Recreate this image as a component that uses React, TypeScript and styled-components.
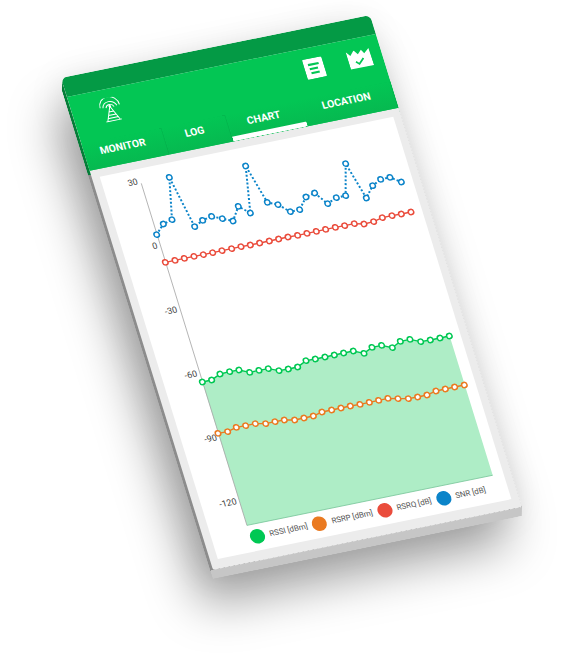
import React from "react";
import styled, { createGlobalStyle } from "styled-components";

const GlobalStyle = createGlobalStyle`
  html, body {
    margin: 0;
    padding: 0;
    width: 563px;
    height: 662px;
    overflow: hidden;
    background: #fff;
    font-family: Roboto, "Liberation Sans", sans-serif;
  }
`;

const DEVICE_W = 320;
const DEVICE_H = 520;

// device plane -> screen: matrix(a, b, c, d, e, f)
const A = 309 / DEVICE_W;
const B = -63 / DEVICE_W;
const C = 152 / DEVICE_H;
const D = 492 / DEVICE_H;
const E = 61;
const F = 78;

type Point = [number, number];

// the curves were read off at 3x from crops, so they are stored in crop coordinates
function fromCrop(ox: number, oy: number, pts: Point[]): Point[] {
  const det = A * D - B * C;
  return pts.map(([x, y]) => {
    const dx = ox + x / 3 - E;
    const dy = oy + y / 3 - F;
    return [(D * dx - C * dy) / det, (A * dy - B * dx) / det] as Point;
  });
}

const snr = fromCrop(110, 150, [
  [140, 254], [160, 222], [186, 209], [178, 82], [254, 230], [278, 211], [305, 199],
  [337, 206], [369, 213], [385, 169], [421, 189], [407, 48], [472, 157], [504, 164],
  [541, 185], [569, 179], [588, 141], [614, 129], [653, 161], [679, 143], [707, 137],
  [707, 41], [769, 144], [788, 107], [812, 88], [840, 82], [874, 96],
]);

const rsrq = fromCrop(110, 150, [
  [166, 337], [195, 331], [223, 325], [252, 319], [280, 314], [308, 308], [336, 302],
  [365, 296], [393, 290], [421, 285], [449, 279], [478, 273], [506, 267], [534, 261],
  [563, 256], [591, 250], [619, 244], [647, 238], [676, 232], [704, 227], [733, 221],
  [762, 222], [791, 215], [817, 203], [846, 197], [874, 192], [903, 186],
]);

const rssi = fromCrop(180, 320, [
  [67, 186], [95, 180], [120, 162], [149, 155], [177, 150], [209, 157], [237, 151],
  [265, 146], [297, 152], [325, 147], [353, 141], [378, 122], [406, 117], [435, 111],
  [463, 105], [491, 99], [520, 93], [552, 100], [576, 82], [605, 76], [637, 83],
  [661, 64], [690, 58], [722, 65], [751, 60], [780, 54], [808, 48],
]);

const rsrp = fromCrop(180, 320, [
  [114, 340], [143, 335], [169, 322], [197, 317], [226, 311], [257, 311], [285, 305],
  [313, 300], [344, 300], [372, 294], [400, 288], [426, 276], [455, 270], [483, 264],
  [511, 258], [540, 253], [568, 247], [596, 241], [624, 235], [654, 236], [685, 236],
  [713, 231], [741, 225], [768, 213], [796, 207], [824, 201], [853, 195],
]);

const COLORS = {
  rssi: "#00c853",
  rsrp: "#ea7a21",
  rsrq: "#ea4c3c",
  snr: "#0b84c9",
};

const AXIS_X = 46.5;
const BASELINE = 482.5;
const FILL_RIGHT = 301;
const TICKS: [string, number][] = [
  ["30", 118.4],
  ["0", 186],
  ["-30", 253.6],
  ["-60", 321.2],
  ["-90", 388.8],
  ["-120", 456.4],
];

const LEGEND = [
  { label: "RSSI [dBm]", color: COLORS.rssi },
  { label: "RSRP [dBm]", color: COLORS.rsrp },
  { label: "RSRQ [dB]", color: COLORS.rsrq },
  { label: "SNR [dB]", color: COLORS.snr },
];

const TABS = [
  { label: "MONITOR", width: 83 },
  { label: "LOG", width: 66 },
  { label: "CHART", width: 77, active: true },
  { label: "LOCATION", width: 94 },
];

const Stage = styled.div`
  width: 563px;
  height: 662px;
  overflow: hidden;
`;

const Device = styled.div`
  position: relative;
  width: ${DEVICE_W}px;
  height: ${DEVICE_H}px;
  transform-origin: 0 0;
  transform: matrix(${A}, ${B}, ${C}, ${D}, ${E}, ${F});
  border-radius: 6px;
  box-shadow: -20px 34px 48px rgba(0, 0, 0, 0.36), -6px 4px 34px rgba(0, 0, 0, 0.1);

  /* the edge of the phone, seen under the face */
  &::before {
    content: "";
    position: absolute;
    left: -3px;
    top: 4px;
    width: ${DEVICE_W + 3}px;
    height: ${DEVICE_H + 5}px;
    clip-path: polygon(3px 0, 100% 0, 100% calc(100% - 9px), calc(100% - 3px) 100%, 0 100%, 0 9px);
    background: linear-gradient(
      to bottom,
      #057d38 0,
      #057d38 98px,
      #8c8c8c 98px,
      #8c8c8c ${DEVICE_H - 4}px,
      #c6c6c6 ${DEVICE_H - 4}px
    );
  }
`;

const Face = styled.div`
  position: relative;
  width: 100%;
  height: 100%;
  display: flex;
  flex-direction: column;
  border-radius: 6px 6px 2px 2px;
  overflow: hidden;
  background: #ececec;
`;

const StatusBar = styled.div`
  height: 20px;
  flex: none;
  background: #049a45;
`;

const Header = styled.div`
  height: 78px;
  flex: none;
  display: flex;
  flex-direction: column;
  background: #03c654;
`;

const ActionRow = styled.div`
  height: 50px;
  flex: none;
  display: flex;
  align-items: center;
  padding: 0 11px 7px 28px;
  box-sizing: border-box;
`;

const Actions = styled.div`
  margin-left: auto;
  display: flex;
  align-items: center;
  gap: 25px;
`;

const TabBar = styled.div`
  flex: 1;
  display: flex;
`;

const Tab = styled.div<{ $width: number; $active?: boolean }>`
  width: ${(p) => p.$width}px;
  display: flex;
  align-items: center;
  justify-content: center;
  padding: 0 4px 8px 0;
  box-sizing: border-box;
  color: #fff;
  font-size: 10.5px;
  font-weight: 700;
  background: linear-gradient(to bottom, #03c654, #06b950);
  box-shadow: ${(p) => (p.$active ? "inset 0 -5px 0 #fff" : "inset -1px 0 0 rgba(0, 110, 50, 0.16)")};
`;

const Screen = styled.div`
  flex: 1;
  margin: 8px 8px 10px;
  display: flex;
  flex-direction: column;
  background: #fff;
`;

const ChartArea = styled.svg`
  display: block;
  flex: none;
`;

const AxisLabel = styled.text`
  font-family: Roboto, "Liberation Sans", sans-serif;
  font-size: 9px;
  fill: #444;
  text-anchor: end;
`;

const Legend = styled.div`
  display: flex;
  align-items: center;
  gap: 5px;
  padding-left: 38px;
`;

const LegendItem = styled.div`
  display: flex;
  align-items: center;
  gap: 5px;
  color: #555;
  font-size: 8px;
`;

const LegendDot = styled.span<{ $color: string }>`
  width: 15px;
  height: 15px;
  border-radius: 50%;
  background: ${(p) => p.$color};
`;

function TowerIcon() {
  return (
    <svg width="22" height="25" viewBox="0 0 22 25" fill="none" stroke="#fff" strokeWidth="1">
      <path d="M1 9A10 10 0 0 1 21 9" />
      <path d="M3.800 9.500A7.500 7.500 0 0 1 18.200 9.500" />
      <path d="M6.800 10A4.500 4.500 0 0 1 15.200 10" />
      <circle cx="11" cy="9" r="1.300" fill="#fff" stroke="none" />
      <path d="M11 9L4.500 24M11 9L17.500 24M8.500 14.500H13.500M7 18H15M5.500 21H16.500M3 24H19" />
    </svg>
  );
}

function ListIcon() {
  return (
    <svg width="20" height="21" viewBox="0 0 20 21">
      <rect width="20" height="21" rx="1.500" fill="#fff" />
      <path d="M4.500 6.300H15.500M5 10.700H13.500M5.500 15H14" stroke="#03c654" strokeWidth="2.200" />
    </svg>
  );
}

function FactoryIcon() {
  return (
    <svg width="24" height="19" viewBox="0 0 21.500 17">
      <path d="M0 0L3.200 4.200L7.300 0L10.200 4L14 0.500L16 4.400L21 0.500L21.500 16.500H0Z" fill="#fff" />
      <path d="M6.500 10.500L9 13L14 8.500" fill="none" stroke="#03c654" strokeWidth="1.600" />
    </svg>
  );
}

function Series({ points, color, dotted }: { points: Point[]; color: string; dotted?: boolean }) {
  return (
    <g>
      <polyline
        points={points.map((p) => p.join(",")).join(" ")}
        fill="none"
        stroke={color}
        strokeWidth={dotted ? 2 : 1.400}
        strokeDasharray={dotted ? "2 2" : undefined}
      />
      {points.map(([x, y], i) => (
        <circle key={i} cx={x} cy={y} r="2.700" fill="#fff" stroke={color} strokeWidth="1.500" />
      ))}
    </g>
  );
}

// the chart is drawn in device coordinates, the viewBox cuts out the screen part
function Chart() {
  const area = [
    ...rssi.map((p) => p.join(",")),
    `${FILL_RIGHT},${rssi[rssi.length - 1][1]}`,
    `${FILL_RIGHT},${BASELINE}`,
    `${AXIS_X},${BASELINE}`,
  ].join(" ");

  return (
    <ChartArea width="304" height="382" viewBox="8 106 304 382">
      <polygon points={area} fill="#aeedc6" />
      <line x1={AXIS_X} y1="121" x2={AXIS_X} y2={BASELINE} stroke="#a9a9a9" strokeWidth="0.800" />
      <line x1={AXIS_X} y1={BASELINE} x2={FILL_RIGHT} y2={BASELINE} stroke="#7cc79c" strokeWidth="0.800" />
      {TICKS.map(([label, y]) => (
        <AxisLabel key={label} x="43.500" y={y + 3}>
          {label}
        </AxisLabel>
      ))}
      <Series points={rssi} color={COLORS.rssi} />
      <Series points={rsrp} color={COLORS.rsrp} />
      <Series points={rsrq} color={COLORS.rsrq} />
      <Series points={snr} color={COLORS.snr} dotted />
    </ChartArea>
  );
}

export default function App() {
  return (
    <Stage>
      <GlobalStyle />
      <Device>
        <Face>
          <StatusBar />
          <Header>
            <ActionRow>
              <TowerIcon />
              <Actions>
                <ListIcon />
                <FactoryIcon />
              </Actions>
            </ActionRow>
            <TabBar>
              {TABS.map((tab) => (
                <Tab key={tab.label} $width={tab.width} $active={tab.active}>
                  {tab.label}
                </Tab>
              ))}
            </TabBar>
          </Header>
          <Screen>
            <Chart />
            <Legend>
              {LEGEND.map((item) => (
                <LegendItem key={item.label}>
                  <LegendDot $color={item.color} />
                  {item.label}
                </LegendItem>
              ))}
            </Legend>
          </Screen>
        </Face>
      </Device>
    </Stage>
  );
}
